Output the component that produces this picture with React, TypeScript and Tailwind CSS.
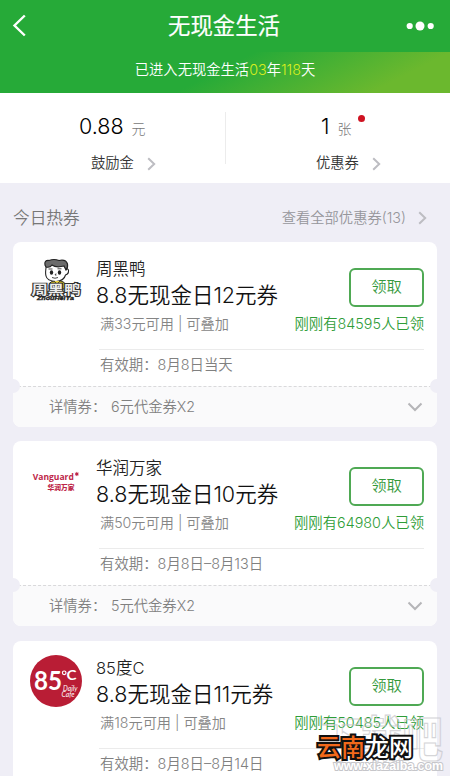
import type { ReactNode } from "react";

const cjk = "font-['Inter','Noto_Sans_CJK_SC',sans-serif]";

function Chevron({ className = "" }: { className?: string }) {
  return (
    <svg width="9" height="14" viewBox="0 0 9 14" className={`shrink-0 ${className}`} fill="none" stroke="#bdbdc2" strokeWidth="2">
      <path d="M1.2 1.2 7.2 7 1.2 12.8" />
    </svg>
  );
}

function DuckLogo() {
  return (
    <svg width="54" height="54" viewBox="0 0 54 54">
      <path d="M19 29 Q20 24.5 27 24.5 Q34 24.5 36 29 L36 33 H19Z" fill="#d3bd25" stroke="#222" strokeWidth="1" />
      <path d="M16.5 9 Q15 17 16 20 Q17 25 26 25.5 Q34 25 35.5 19 Q39 18 38.5 14 Q37 12 36 13 L35 8 Z" fill="#fff" stroke="#222" strokeWidth="1.1" />
      <path d="M15 9 Q14 4 19 4.5 Q24 2.5 29 4.5 Q36 3 37.5 8 Q38 12 36 14 L34 10 Q26 12 22 9 Q20 12 16 11Z" fill="#6b6b6b" stroke="#222" strokeWidth="1.2" />
      <ellipse cx="21.5" cy="16.5" rx="1.7" ry="2.3" fill="#222" />
      <ellipse cx="29.5" cy="16.5" rx="1.7" ry="2.3" fill="#222" />
      <path d="M18.5 13h4M27.5 12.8h4M22 21.5q3 1.5 6 0M26 17.5l-1 1.5h1.5" fill="none" stroke="#333" strokeWidth=".9" />
      <path d="M24 25l3 3 3-3" fill="#f0d944" stroke="#222" strokeWidth=".7" />
      <text x="1.5" y="39" fontSize="17" fontWeight="700" textLength="49" lengthAdjust="spacingAndGlyphs" fontFamily="'Noto Sans CJK SC', sans-serif" fill="#ededed" stroke="#303030" strokeWidth="2.6" paintOrder="stroke" transform="translate(0 9) scale(1 .74)">
        周黑鸭
      </text>
      <text x="7" y="43.8" fontSize="5" fontWeight="700" textLength="37" lengthAdjust="spacingAndGlyphs" fontFamily="'Liberation Sans', sans-serif" fontStyle="italic" fill="#222" stroke="#222" strokeWidth=".3">
        ZhouHeiYa
      </text>
    </svg>
  );
}

function VanguardLogo() {
  return (
    <svg width="54" height="54" viewBox="0 0 54 54">
      <g fill="#bd2547">
        <text x="2.8" y="25.3" fontSize="9.3" fontWeight="700" textLength="41" lengthAdjust="spacingAndGlyphs" fontFamily="'Open Sans', sans-serif">
          Vanguard
        </text>
        <text x="17.5" y="34.8" fontSize="6.7" fontWeight="900" textLength="27" lengthAdjust="spacingAndGlyphs" fontFamily="'Noto Sans CJK SC', sans-serif">
          华润万家
        </text>
        <circle cx="46.8" cy="19" r="1.5" />
      </g>
      <path d="M46.8 16.9v4.2M44.9 17.9l3.8 2.2M48.7 17.9l-3.8 2.2" stroke="#bd2547" strokeWidth=".7" />
    </svg>
  );
}

function CafeLogo() {
  return (
    <svg width="54" height="54" viewBox="0 0 54 54">
      <circle cx="26" cy="26" r="26" fill="#b91d35" />
      <g fill="#fff">
        <text x="4" y="35.3" fontSize="27.5" fontWeight="700" textLength="28" lengthAdjust="spacingAndGlyphs" fontFamily="Lato, sans-serif">
          85
        </text>
        <text x="36.5" y="25" fontSize="13" fontWeight="700" textLength="10" lengthAdjust="spacingAndGlyphs" fontFamily="Lato, sans-serif">
          C
        </text>
        <text x="33" y="36" fontSize="7" fontWeight="400" fontStyle="italic" textLength="14.5" lengthAdjust="spacingAndGlyphs" fontFamily="Lato, sans-serif">
          Daily
        </text>
        <text x="31.5" y="42.3" fontSize="7" fontWeight="400" fontStyle="italic" textLength="13" lengthAdjust="spacingAndGlyphs" fontFamily="Lato, sans-serif">
          Cafe
        </text>
      </g>
      <circle cx="34.2" cy="17.8" r="1.8" fill="none" stroke="#fff" strokeWidth="1.2" />
    </svg>
  );
}

type Coupon = {
  logo: ReactNode;
  name: string;
  title: string;
  condition: string;
  taken: string;
  validity: string;
  detail: string;
};

const coupons: Coupon[] = [
  { logo: <DuckLogo />, name: "周黑鸭", title: "8.8无现金日12元券", condition: "满33元可用 | 可叠加", taken: "84595", validity: "8月8日当天", detail: "6元代金券X2" },
  { logo: <VanguardLogo />, name: "华润万家", title: "8.8无现金日10元券", condition: "满50元可用 | 可叠加", taken: "64980", validity: "8月8日–8月13日", detail: "5元代金券X2" },
  { logo: <CafeLogo />, name: "85度C", title: "8.8无现金日11元券", condition: "满18元可用 | 可叠加", taken: "50485", validity: "8月8日–8月14日", detail: "5元代金券X2" },
];

function CouponCard({ c }: { c: Coupon }) {
  return (
    <article className="relative h-[185px] shrink-0 overflow-hidden rounded-[8px] bg-white last:mt-px">
      <div className="flex h-[144px] pr-[13px] pl-[17px]">
        <div className="w-[66px] shrink-0 pt-[14px]">{c.logo}</div>
        <div className="min-w-0 flex-1">
          <div className="flex h-[107px] justify-between">
            <div className="whitespace-nowrap pt-[16px]">
              <h3 className="text-[16.5px] leading-[22px] font-[350] text-[#222]">{c.name}</h3>
              <h2 className="text-[21.5px] leading-[30px] font-[350] text-[#111]">{c.title}</h2>
              <p className="mt-[4px] ml-1 text-[14.2px] leading-[20px] font-[350] text-[#858585]">{c.condition}</p>
            </div>
            <div className="flex flex-col items-end whitespace-nowrap pt-[26px]">
              <button className="h-[39px] w-[75px] rounded-[6px] border-2 border-[#4fa954] pb-px text-[15.3px] leading-[34px] font-[350] text-[#359a3c]">领取</button>
              <p className="-ml-28 mt-[7px] text-[14.35px] leading-[20px] font-[350] text-[#2f9d38]">刚刚有{c.taken}人已领</p>
            </div>
          </div>
          <div className="ml-[3px] border-t border-[#ebebeb] pt-[4px] pl-px text-[14.4px] leading-[22px] font-[350] text-[#808080]">
            有效期：{c.validity}
          </div>
        </div>
      </div>
      <div className="flex h-[41px] items-center border-t border-dashed border-[#d9d9db] bg-[#fafafb] pr-[14px] pb-px pl-[36px] text-[14.3px] font-[350] text-[#808080]">
        <span className="w-[62px] whitespace-nowrap">详情券：</span>
        <span className="flex-1">{c.detail}</span>
        <svg width="16" height="10" viewBox="0 0 16 10" fill="none" stroke="#b5b5b8" strokeWidth="2">
          <path d="M1.5 1.5 8 8l6.5-6.5" />
        </svg>
      </div>
      <i className="absolute top-[137px] -left-[7px] size-[14px] rounded-full bg-[#efeef6]" />
      <i className="absolute top-[137px] -right-[7px] size-[14px] rounded-full bg-[#efeef6]" />
    </article>
  );
}

function Watermark() {
  return (
    <div className="absolute top-[706px] left-[315px] h-[70px] w-[135px] overflow-hidden">
      <div className="absolute top-[5px] left-[5px] origin-center scale-y-120 text-[41px] leading-[56px] font-bold whitespace-nowrap text-transparent opacity-70 [-webkit-text-stroke:1px_#c4c4c8]">下载吧</div>
      <div className="absolute top-[51px] left-[19px] font-['Liberation_Sans',sans-serif] text-[12.4px] leading-[18px] font-bold text-white [-webkit-text-stroke:2px_#c6c6ca] [paint-order:stroke]">www.xiazaiba.com</div>
      <div className="absolute top-[24px] left-[2px] text-[24px] leading-[36px] font-medium whitespace-nowrap text-white [-webkit-text-stroke:4px_#111] [paint-order:stroke]">
        <span className="text-[#f2691b]">云南</span>龙网
      </div>
    </div>
  );
}

export default function App() {
  return (
    <main className={`relative flex h-[776px] w-[450px] flex-col overflow-hidden bg-[#efeef6] ${cjk}`}>
      <header className="flex h-[52px] shrink-0 items-center justify-between bg-[#26aa38] pr-[16px] pl-[12px]">
        <svg width="28" height="24" viewBox="0 0 28 24" fill="none" stroke="#fff" strokeWidth="2.4">
          <path d="M12.8 1.5 2.5 11.5 12.8 21.5" />
        </svg>
        <h1 className="pl-[2px] text-[22.4px] leading-[52px] font-normal text-white [-webkit-text-stroke:0.2px_white]">无现金生活</h1>
        <svg width="28" height="10" viewBox="0 0 28 10" fill="#fff">
          <circle cx="3.7" cy="5" r="3.1" />
          <circle cx="14" cy="5" r="4.5" />
          <circle cx="24.7" cy="5" r="3.1" />
        </svg>
      </header>
      <div className="h-[41px] shrink-0 bg-[linear-gradient(153deg,#26aa38_48%,#6bb82e_85%)] text-center text-[14.3px] leading-[35px] font-[350] text-white">
        已进入无现金生活<span className="text-[#d7ee1e]">03</span>年<span className="text-[#d7ee1e]">118</span>天
      </div>
      <section className="flex h-[90px] shrink-0 bg-white">
        <div className="flex w-[225px] flex-col pt-[19px] pl-[79px]">
          <div className="flex h-[28px] items-center">
            <span className="text-[21.5px] leading-[28px] font-[350] text-black">0.88</span>
            <span className="mt-[5px] ml-[8px] text-[14px] leading-[20px] font-light text-[#777]">元</span>
          </div>
          <div className="mt-[13px] ml-[12px] flex items-center text-[14.3px] leading-[20px] font-[350] text-[#333]">
            鼓励金
            <Chevron className="mt-[2px] ml-[13px]" />
          </div>
        </div>
        <div className="mt-[19px] h-[52px] w-px bg-[#ececec]" />
        <div className="flex flex-col pt-[19px] pl-[90px]">
          <div className="ml-[5px] flex h-[28px] items-center">
            <span className="text-[21.5px] leading-[28px] font-[350] text-black">1</span>
            <span className="mt-[5px] ml-[8px] text-[14px] leading-[20px] font-light text-[#777]">张</span>
            <i className="mb-[15px] ml-[7px] size-[6.5px] rounded-full bg-[#cf1322]" />
          </div>
          <div className="mt-[13px] flex items-center text-[14.3px] leading-[20px] font-[350] text-[#333]">
            优惠券
            <Chevron className="mt-[2px] ml-[13px]" />
          </div>
        </div>
      </section>
      <section className="flex h-[59px] shrink-0 items-center pt-[11px] pr-[23px] pl-[13px]">
        <h2 className="flex-1 pt-[2px] text-[16.7px] font-[350] text-[#777]">今日热券</h2>
        <span className="text-[14.3px] font-[350] text-[#96969b]">查看全部优惠券(13)</span>
        <Chevron className="ml-[12px]" />
      </section>
      <section className="flex flex-col gap-[14px] px-[13px]">
        {coupons.map((c) => (
          <CouponCard key={c.name} c={c} />
        ))}
      </section>
      <Watermark />
    </main>
  );
}
